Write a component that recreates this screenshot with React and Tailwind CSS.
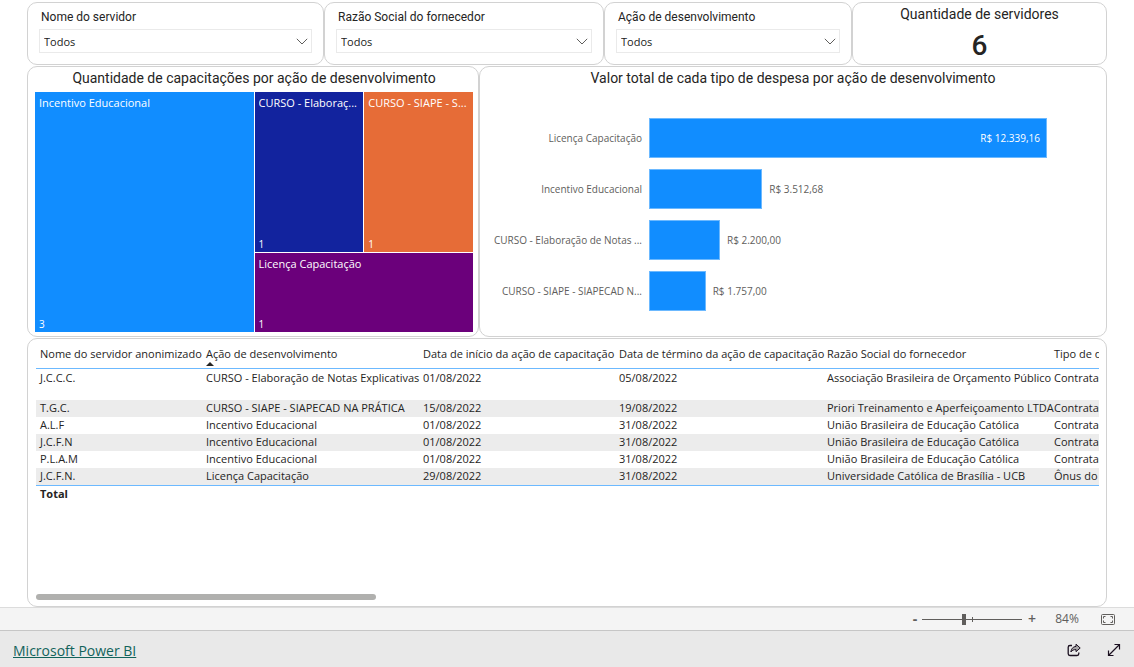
import { useState } from 'react'

const slicers = [
  { id: 'servidor', label: 'Nome do servidor' },
  { id: 'fornecedor', label: 'Razão Social do fornecedor' },
  { id: 'acao', label: 'Ação de desenvolvimento' },
]

const expenses = [
  { name: 'Licença Capacitação', value: 12339.16, label: 'R$ 12.339,16' },
  { name: 'Incentivo Educacional', value: 3512.68, label: 'R$ 3.512,68' },
  { name: 'CURSO - Elaboração de Notas ...', value: 2200, label: 'R$ 2.200,00' },
  { name: 'CURSO - SIAPE - SIAPECAD N...', value: 1757, label: 'R$ 1.757,00' },
]

const columns = [
  'Nome do servidor anonimizado',
  'Ação de desenvolvimento',
  'Data de início da ação de capacitação',
  'Data de término da ação de capacitação',
  'Razão Social do fornecedor',
  'Tipo de despesa',
]

const rows = [
  ['J.C.C.C.', 'CURSO - Elaboração de Notas Explicativas', '01/08/2022', '05/08/2022', 'Associação Brasileira de Orçamento Público', 'Contratação'],
  ['T.G.C.', 'CURSO - SIAPE - SIAPECAD NA PRÁTICA', '15/08/2022', '19/08/2022', 'Priori Treinamento e Aperfeiçoamento LTDA', 'Contratação'],
  ['A.L.F', 'Incentivo Educacional', '01/08/2022', '31/08/2022', 'União Brasileira de Educação Católica', 'Contratação'],
  ['J.C.F.N', 'Incentivo Educacional', '01/08/2022', '31/08/2022', 'União Brasileira de Educação Católica', 'Contratação'],
  ['P.L.A.M', 'Incentivo Educacional', '01/08/2022', '31/08/2022', 'União Brasileira de Educação Católica', 'Contratação'],
  ['J.C.F.N.', 'Licença Capacitação', '29/08/2022', '31/08/2022', 'Universidade Católica de Brasília - UCB', 'Ônus do servidor'],
]

function Card({ className = '', children }) {
  return (
    <section className={`min-w-0 rounded-[10px] border border-[#d2d2d2] bg-white ${className}`}>
      {children}
    </section>
  )
}

function Title({ children }) {
  return (
    <h2 className="text-center font-['Roboto',sans-serif] text-[14px] leading-[22px] text-[#252423]">
      {children}
    </h2>
  )
}

function Slicer({ id, label }) {
  return (
    <Card className="px-[11px] pt-[6px]">
      <label
        htmlFor={id}
        className="block pl-[2px] font-['Roboto',sans-serif] text-[12px] leading-4 text-[#252423]"
      >
        {label}
      </label>
      <div className="relative mt-1">
        <select
          id={id}
          className="block h-6 w-full appearance-none border border-[#eaeaea] bg-white pl-1 pt-[2px] text-[11px] text-[#212121]"
        >
          <option>Todos</option>
        </select>
        <svg
          className="pointer-events-none absolute right-1 top-[9px] h-[7px] w-3 text-[#605e5c]"
          viewBox="0 0 12 7"
          fill="none"
          stroke="currentColor"
        >
          <path d="M.8.8 6 6 11.2.8" />
        </svg>
      </div>
    </Card>
  )
}

function Tile({ name, count, className }) {
  return (
    <div className={`flex min-w-0 flex-col justify-between px-1 pt-[3px] text-white ${className}`}>
      <span className="truncate text-[11px] leading-4">{name}</span>
      <span className="text-[10px] leading-4">{count}</span>
    </div>
  )
}

function Treemap() {
  return (
    <Card className="pb-1 pl-[7px] pr-[5px]">
      <Title>Quantidade de capacitações por ação de desenvolvimento</Title>
      <div className="mt-[3px] grid h-[240px] grid-cols-4 grid-rows-3 gap-px">
        <Tile name="Incentivo Educacional" count={3} className="col-span-2 row-span-3 bg-[#118dff]" />
        <Tile name="CURSO - Elaboraç..." count={1} className="row-span-2 bg-[#12239e]" />
        <Tile name="CURSO - SIAPE - S..." count={1} className="row-span-2 bg-[#e66c37]" />
        <Tile name="Licença Capacitação" count={1} className="col-span-2 bg-[#6b007b]" />
      </div>
    </Card>
  )
}

function BarChart() {
  const max = expenses[0].value
  return (
    <Card>
      <Title>Valor total de cada tipo de despesa por ação de desenvolvimento</Title>
      <ul className="mt-[29px] flex flex-col gap-[11px] pr-[59px] text-[10px]">
        {expenses.map((item) => {
          const inside = item.value === max
          return (
            <li key={item.name} className="flex h-10 items-center gap-[7px]">
              <span className="w-[162px] shrink-0 whitespace-nowrap text-right text-[#605e5c]">
                {item.name}
              </span>
              <div className="flex h-full min-w-0 flex-1 items-center gap-[7px]">
                <div
                  className="flex h-full shrink-0 items-center justify-end border border-[#6cb9ff] bg-[#118dff] pr-[6px] text-white"
                  style={{ width: `${(item.value / max) * 100}%` }}
                >
                  {inside && item.label}
                </div>
                {!inside && <span className="whitespace-nowrap text-[#605e5c]">{item.label}</span>}
              </div>
            </li>
          )
        })}
      </ul>
    </Card>
  )
}

function DataTable() {
  return (
    <Card className="flex flex-1 flex-col pb-[6px] pl-2 pr-[7px] pt-[3px]">
      <div className="flex-1 overflow-hidden">
        <table className="w-[1240px] table-fixed border-collapse text-left text-[11px] leading-4 text-[#252423]">
          <colgroup>
            <col className="w-[166px]" />
            <col className="w-[217px]" />
            <col className="w-[196px]" />
            <col className="w-[208px]" />
            <col className="w-[227px]" />
            <col />
          </colgroup>
          <thead>
            <tr className="h-[26px] border-b border-[#6cb9ff] align-top">
              {columns.map((column, i) => (
                <th key={column} className="relative whitespace-nowrap px-1 pt-1 font-normal">
                  {column}
                  {i === 1 && (
                    <svg className="absolute bottom-[2px] left-1 h-1 w-2" viewBox="0 0 8 4">
                      <path d="M0 4 4 0l4 4z" fill="#252423" />
                    </svg>
                  )}
                </th>
              ))}
            </tr>
          </thead>
          <tbody>
            {rows.map((row, i) => (
              <tr key={i} className={`align-top ${i === 0 ? 'h-8' : 'h-[17px]'} ${i % 2 ? 'bg-[#ececec]' : ''}`}>
                {row.map((cell, j) => (
                  <td key={j} className={`whitespace-nowrap px-1 ${i === 0 ? 'pt-px' : ''}`}>
                    {cell}
                  </td>
                ))}
              </tr>
            ))}
          </tbody>
          <tfoot>
            <tr className="border-t border-[#6cb9ff]">
              <th className="px-1 font-bold" colSpan={6}>
                Total
              </th>
            </tr>
          </tfoot>
        </table>
      </div>
      <div className="h-[6px] w-[32%] rounded-full bg-[#b0b0ae]" />
    </Card>
  )
}

function ZoomBar() {
  const [zoom, setZoom] = useState(84)
  const step = (delta) => setZoom((z) => Math.min(200, Math.max(10, z + delta)))
  return (
    <div className="flex h-[23px] items-center justify-end border-t border-[#dcdcdc] bg-[#f4f4f4] pr-[19px] text-[#605e5c]">
      <button type="button" aria-label="Reduzir" onClick={() => step(-10)} className="w-[14px] text-[14px] font-bold leading-5">
        -
      </button>
      <div className="relative flex items-center">
        <input
          type="range"
          aria-label="Zoom"
          min="0"
          max="200"
          value={zoom}
          onChange={(e) => setZoom(Number(e.target.value))}
          className="h-px w-[100px] appearance-none bg-[#605e5c] [&::-webkit-slider-thumb]:h-[11px] [&::-webkit-slider-thumb]:w-1 [&::-webkit-slider-thumb]:appearance-none [&::-webkit-slider-thumb]:bg-[#605e5c]"
        />
        <span className="pointer-events-none absolute left-1/2 h-[5px] w-px bg-[#605e5c]" />
      </div>
      <button type="button" aria-label="Ampliar" onClick={() => step(10)} className="w-5 text-[14px] font-semibold leading-5">
        +
      </button>
      <span className="w-[50px] text-center text-[12px]">{zoom}%</span>
      <button type="button" aria-label="Ajustar à página" className="ml-[9px]">
        <svg className="h-[11px] w-[14px]" viewBox="0 0 14 11" fill="none" stroke="currentColor">
          <rect x="0.5" y="0.5" width="13" height="10" rx="1" />
          <path d="M2.5 4.5v-2h2M9.5 2.5h2v2M11.5 6.5v2h-2M4.5 8.5h-2v-2" />
        </svg>
      </button>
    </div>
  )
}

function Footer() {
  return (
    <footer className="box-content flex h-9 items-center justify-between border-t border-[#c6c6c6] bg-[#e9e9e9] px-[13px]">
      <a href="#" className="mt-1 text-[14px] leading-5 text-[#12635b] underline">
        Microsoft Power BI
      </a>
      <div className="mt-[2px] flex items-center gap-[26px] text-[#1b1020]">
        <button type="button" aria-label="Compartilhar">
          <svg className="h-[14px] w-[14px]" viewBox="0 0 14 14" fill="none" stroke="currentColor" strokeLinejoin="round">
            <path d="M5 2.500H3A1.800 1.800 0 0 0 1.200 4.300v6.400A1.800 1.800 0 0 0 3 12.500h7a1.800 1.800 0 0 0 1.800-1.800V9.500" strokeWidth="1.3" />
            <path d="M9 1.200 13.200 5 9 8.700V6.600C6.600 6.500 5 7.300 3.900 9 4.100 5.800 5.900 3.700 9 3.400Z" fill="#a8a6a8" />
          </svg>
        </button>
        <button type="button" aria-label="Tela inteira">
          <svg className="h-[14px] w-[14px]" viewBox="0 0 14 14" fill="none" stroke="currentColor" strokeWidth="1.2">
            <path d="M1.500 12.500l11-11M7.500 1.500h5v5M1.500 7.500v5h5" />
          </svg>
        </button>
      </div>
    </footer>
  )
}

export default function App() {
  return (
    <div className="flex min-h-screen flex-col bg-white font-['Open_Sans','Noto_Sans',sans-serif]">
      <main className="flex flex-1 flex-col gap-px px-[27px] pt-[2px]">
        <div className="grid h-[63px] grid-cols-[297fr_280fr_248fr_255fr]">
          {slicers.map((slicer) => (
            <Slicer key={slicer.id} {...slicer} />
          ))}
          <Card className="text-center font-['Roboto',sans-serif] text-[#252423]">
            <Title>Quantidade de servidores</Title>
            <p className="pt-1 text-[28px] font-medium leading-[34px]">6</p>
          </Card>
        </div>
        <div className="grid grid-cols-[452fr_628fr]">
          <Treemap />
          <BarChart />
        </div>
        <DataTable />
      </main>
      <ZoomBar />
      <Footer />
    </div>
  )
}
